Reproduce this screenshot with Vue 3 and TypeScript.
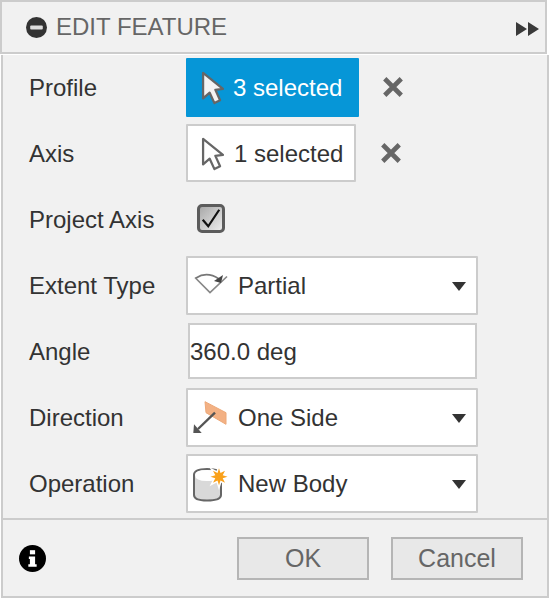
<script setup lang="ts">
const arrow = 'M2 2 L2 29 L9 23 L14 34 L20 31 L15 20 L23 19 Z'
const star = '35.5,10.7 30.7,12.2 33,16.7 28.5,14.4 27,19.2 25.5,14.4 21,16.7 23.3,12.2 18.5,10.7 23.3,9.2 21,4.7 25.5,7 27,2.2 28.5,7 33,4.7 30.7,9.2'
</script>

<template>
  <div class="panel">
    <header class="head">
      <span class="head-left">
        <svg class="minus" viewBox="0 0 20 20" width="21" height="21">
          <circle cx="10" cy="10" r="10" fill="#333" />
          <rect x="4" y="8" width="12" height="4" rx="1" fill="#ddd" />
        </svg>
        <span class="title">EDIT FEATURE</span>
      </span>
      <svg class="ff" viewBox="0 0 23 14" width="23" height="14">
        <path d="M0 0 L11 7 L0 14 Z M12 0 L23 7 L12 14 Z" fill="#3a3a3a" />
      </svg>
    </header>

    <main class="body">
      <div class="row">
        <label class="lbl">Profile</label>
        <div class="ctl">
          <div class="sel active">
            <svg class="arrow" viewBox="0 0 25 36" width="24" height="34"><path :d="arrow" fill="#f4f4f4" stroke="#666" stroke-width="2.4" stroke-linejoin="round" /></svg>
            <span>3 selected</span>
          </div>
          <svg class="x x1" viewBox="0 0 20 20" width="22" height="22"><path d="M2.5 2.5 L17.5 17.5 M17.5 2.5 L2.5 17.5" stroke="#666" stroke-width="4.2" /></svg>
        </div>
      </div>

      <div class="row">
        <label class="lbl">Axis</label>
        <div class="ctl">
          <div class="sel plain">
            <svg class="arrow" viewBox="0 0 25 36" width="24" height="34"><path :d="arrow" fill="#fff" stroke="#666" stroke-width="2.4" stroke-linejoin="round" /></svg>
            <span>1 selected</span>
          </div>
          <svg class="x x2" viewBox="0 0 20 20" width="22" height="22"><path d="M2.5 2.5 L17.5 17.5 M17.5 2.5 L2.5 17.5" stroke="#666" stroke-width="4.2" /></svg>
        </div>
      </div>

      <div class="row">
        <label class="lbl">Project Axis</label>
        <div class="ctl">
          <div class="check">
            <svg viewBox="0 0 24 24" width="24" height="24"><path d="M3 14 L9 21 L21 3" fill="none" stroke="#111" stroke-width="2.4" /></svg>
          </div>
        </div>
      </div>

      <div class="row">
        <label class="lbl">Extent Type</label>
        <div class="ctl">
          <div class="drop">
            <svg class="ico" viewBox="0 0 36 24" width="36" height="24">
              <path d="M3 3.5 L18 18.5 L35 2.5" fill="none" stroke="#888" stroke-width="1.7" />
              <path d="M4 4 Q15 -3 27 5" fill="none" stroke="#777" stroke-width="1.7" />
              <path d="M22 7 L31 1 L29 9 Z" fill="#444" />
            </svg>
            <span class="val">Partial</span>
            <span class="caret"></span>
          </div>
        </div>
      </div>

      <div class="row">
        <label class="lbl">Angle</label>
        <div class="ctl">
          <div class="input">360.0 deg</div>
        </div>
      </div>

      <div class="row">
        <label class="lbl">Direction</label>
        <div class="ctl">
          <div class="drop">
            <svg class="ico" viewBox="0 0 36 36" width="36" height="36">
              <path d="M13 1.7 L34 12.7 L34 24.3 L14 12.7 Z" fill="#f3b184" stroke="#eda878" stroke-width="1" />
              <path d="M23 12.7 L6 29" stroke="#555" stroke-width="2.4" />
              <path d="M1.3 33 L2 24.3 L9.7 33 Z" fill="#555" />
            </svg>
            <span class="val">One Side</span>
            <span class="caret"></span>
          </div>
        </div>
      </div>

      <div class="row">
        <label class="lbl">Operation</label>
        <div class="ctl">
          <div class="drop">
            <svg class="ico" viewBox="0 0 36 36" width="36" height="36">
              <path d="M2 9 Q2 3 15 3 Q29 3 29 9 L29 29 Q29 34.5 15 34.5 Q2 34.5 2 29 Z" fill="#d9d9d9" stroke="#666" stroke-width="2" />
              <path d="M3 9 Q3 4 15 4 Q28 4 28 9 Q28 15 15 15 Q3 15 3 9 Z" fill="#fff" />
              <polygon :points="star" fill="#fff" stroke="#fff" stroke-width="3" />
              <polygon :points="star" fill="#f9a11b" />
            </svg>
            <span class="val">New Body</span>
            <span class="caret"></span>
          </div>
        </div>
      </div>
    </main>

    <footer class="foot">
      <svg class="info" viewBox="0 0 26 26" width="27" height="27">
        <circle cx="13" cy="13" r="13" fill="#000" />
        <rect x="10.5" y="5" width="5" height="4" fill="#fff" />
        <path d="M9.5 11 H15.5 V18.5 H17 V21 H9 V18.5 H10.5 V13.5 H9.5 Z" fill="#fff" />
      </svg>
      <div class="btns">
        <button class="btn">OK</button>
        <button class="btn">Cancel</button>
      </div>
    </footer>
  </div>
</template>

<style scoped>
.panel {
  width: 549px;
  height: 600px;
  box-sizing: border-box;
  padding-bottom: 2px;
  background: #fff;
  display: flex;
  flex-direction: column;
  font-family: "Liberation Sans", Arial, sans-serif;
  font-size: 24px;
  color: #333;
}
.head {
  height: 54px;
  flex: none;
  box-sizing: border-box;
  margin-right: 2px;
  border: 2px solid #ccc;
  background: #f1f1f1;
  display: flex;
  align-items: center;
  justify-content: space-between;
  padding: 0 6px 0 24px;
}
.head-left {
  display: flex;
  align-items: center;
  gap: 9px;
}
.title {
  color: #666;
}
.ff {
  margin-top: 4px;
}
.body {
  flex: 1;
  margin: 1px 0 0 1px;
  border-left: 2px solid #ccc;
  border-right: 2px solid #ccc;
  background: #f1f1f1;
  display: flex;
  flex-direction: column;
}
.row {
  height: 66px;
  display: flex;
  align-items: center;
}
.lbl {
  width: 183px;
  flex: none;
  box-sizing: border-box;
  padding-left: 26px;
}
.ctl {
  display: flex;
  align-items: center;
  margin-bottom: 2px;
}
.sel {
  height: 59px;
  box-sizing: border-box;
  display: flex;
  align-items: center;
  padding-top: 2px;
  border-radius: 1px;
}
.sel.active {
  width: 173px;
  background: #0696d7;
  color: #fff;
  padding-left: 15px;
  gap: 8px;
}
.sel.plain {
  width: 170px;
  height: 58px;
  background: #fff;
  border: 2px solid #ccc;
  padding-left: 13px;
  gap: 9px;
}
.arrow {
  flex: none;
}
.x1 {
  margin-left: 23px;
}
.x2 {
  margin-left: 24px;
}
.check {
  width: 28px;
  height: 29px;
  margin-left: 11px;
  margin-bottom: 2px;
  box-sizing: border-box;
  border: 3px solid #5c5c5c;
  border-radius: 5px;
  background: linear-gradient(135deg, #a9a9a9, #ececec);
  display: flex;
  align-items: center;
  justify-content: center;
}
.drop {
  width: 292px;
  height: 59px;
  box-sizing: border-box;
  border: 2px solid #ccc;
  background: #fff;
  display: flex;
  align-items: center;
  padding: 2px 10px 0 4px;
  border-radius: 1px;
}
.ico {
  flex: none;
  overflow: visible;
}
.val {
  margin-left: 10px;
  flex: 1;
}
.caret {
  width: 0;
  height: 0;
  border-left: 7px solid transparent;
  border-right: 7px solid transparent;
  border-top: 9px solid #333;
}
.input {
  width: 289px;
  height: 56px;
  margin-left: 2px;
  box-sizing: border-box;
  border: 2px solid #ccc;
  background: #fff;
  display: flex;
  align-items: center;
  padding-top: 2px;
}
.foot {
  flex: none;
  height: 80px;
  margin: 0 0 0 1px;
  box-sizing: border-box;
  border: 2px solid #ccc;
  background: #f1f1f1;
  display: flex;
  align-items: center;
  justify-content: space-between;
  padding: 0 24px 0 16px;
}
.btns {
  display: flex;
  gap: 22px;
}
.btn {
  width: 132px;
  height: 43px;
  box-sizing: border-box;
  border: 2px solid #b5b5b5;
  background: #e8e8e8;
  color: #666;
  font: inherit;
  font-size: 25px;
  padding: 0;
  border-radius: 0;
}
</style>

<style>
body {
  background: #fff;
}
</style>
